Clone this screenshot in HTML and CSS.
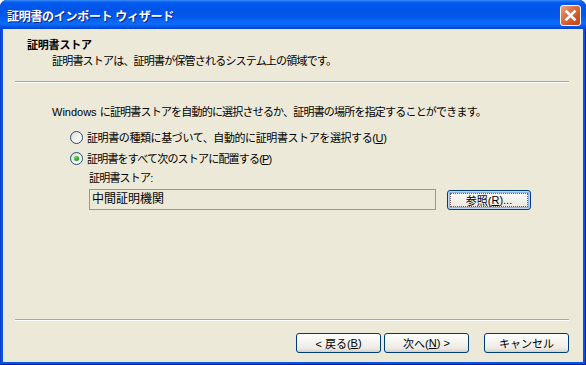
FILE: index.html
```html
<!DOCTYPE html>
<html lang="ja">
<head>
<meta charset="utf-8">
<link rel="stylesheet" href="styles.css">
</head>
<body>
<div class="window">
  <div class="titlebar">
    <span class="title">証明書のインポート ウィザード</span>
    <span class="close"><svg width="19" height="19" viewBox="0 0 19 19"><path d="M5.5 5.5 L13.5 13.5 M13.5 5.5 L5.5 13.5" stroke="#fff" stroke-width="2.6" stroke-linecap="square" fill="none"/></svg></span>
  </div>
  <div class="client">
    <div class="header">
      <div class="h-title">証明書ストア</div>
      <div class="h-sub">証明書ストアは、証明書が保管されるシステム上の領域です。</div>
    </div>
    <div class="sep"></div>
    <div class="content">
      <div class="intro"><span class="lat">Windows </span>に証明書ストアを自動的に選択させるか、証明書の場所を指定することができます。</div>
      <div class="radio first"><span class="rb"></span><span>証明書の種類に基づいて、自動的に証明書ストアを選択する(<u>U</u>)</span></div>
      <div class="radio second"><span class="rb checked"></span><span>証明書をすべて次のストアに配置する(<u>P</u>)</span></div>
      <div class="store">
        <div class="label">証明書ストア:</div>
        <div class="row">
          <div class="input">中間証明機関</div>
          <span class="btn focus">参照(<u>R</u>)...</span>
        </div>
      </div>
    </div>
    <div class="sep bottom"></div>
    <div class="footer">
      <span class="btn">&lt; 戻る(<u>B</u>)</span>
      <span class="btn">次へ(<u>N</u>) &gt;</span>
      <span class="btn cancel">キャンセル</span>
    </div>
  </div>
</div>
</body>
</html>
```

FILE: styles.css
```css
html, body {
  margin: 0;
  padding: 0;
  background: #ffffff;
}
body {
  width: 586px;
  height: 365px;
  overflow: hidden;
  font-family: "Liberation Sans", "Noto Sans CJK JP", sans-serif;
  font-size: 11px;
  color: #000;
}
.window {
  width: 586px;
  height: 365px;
  box-sizing: border-box;
  background: #0855dd;
  border-radius: 7px 7px 0 0;
  display: flex;
  flex-direction: column;
  box-shadow: inset 1px 0 #0a3fd0, inset -1px 0 #001ea0, inset 0 -1px #001ea0;
  overflow: hidden;
}
.titlebar {
  height: 29px;
  flex: none;
  display: flex;
  align-items: center;
  justify-content: space-between;
  padding: 0 5px 0 7px;
  background: linear-gradient(to bottom, #3d8ff7 0, #0a5fef 2px, #0058ee 4px, #0054e6 10px, #0058ea 16px, #0a66f6 21px, #0d6cf8 24px, #0054e4 27px, #003dd0 29px);
  border-radius: 7px 7px 0 0;
}
.title {
  color: #fff;
  font-weight: bold;
  font-size: 12px;
  letter-spacing: -0.3px;
  text-shadow: 1px 1px #0a1e80;
  padding-top: 1px;
}
.close {
  width: 21px;
  height: 21px;
  box-sizing: border-box;
  border: 1px solid #fff;
  border-radius: 3px;
  background: linear-gradient(135deg, #eea082 0%, #e0734d 35%, #d05227 70%, #c1441b 100%);
  display: flex;
  margin-top: 2px;
}
.client {
  flex: 1;
  margin: 0 3px 3px 3px;
  background: #ece9d8;
  display: flex;
  flex-direction: column;
  letter-spacing: -0.8px;
}
.lat { letter-spacing: 0; }
.header {
  padding-top: 9px;
}
.h-title {
  margin-left: 24px;
  font-weight: bold;
  line-height: 14px;
  letter-spacing: -0.2px;
}
.h-sub {
  margin: 2px 0 0 49px;
  line-height: 14px;
}
.sep {
  margin: 13px 14px 0 12px;
  border-top: 1px solid #aca899;
  border-bottom: 1px solid #ffffff;
  height: 0;
}
.content {
  padding-top: 22px;
}
.intro {
  margin-left: 49px;
  line-height: 14px;
}
.radio {
  margin: 11px 0 0 67px;
  height: 14px;
  display: flex;
  align-items: center;
  gap: 4px;
}
.radio.first {
  letter-spacing: -0.4px;
}
.radio.second {
  margin-top: 7px;
}
.rb {
  width: 13px;
  height: 13px;
  box-sizing: border-box;
  border-radius: 50%;
  border: 1px solid #1c5180;
  background: linear-gradient(135deg, #dcdad1 0%, #f4f3ee 55%, #ffffff 100%);
  display: flex;
  align-items: center;
  justify-content: center;
}
.rb.checked::after {
  content: "";
  width: 5px;
  height: 5px;
  border-radius: 50%;
  background: radial-gradient(circle at 35% 35%, #5ee05e, #21a121 60%, #1a8f1a);
}
.store {
  margin: 6px 0 0 86px;
}
.label {
  line-height: 14px;
}
.row {
  margin-top: 4px;
  display: flex;
  align-items: center;
  gap: 11px;
}
.input {
  width: 347px;
  height: 21px;
  box-sizing: border-box;
  border: 1px solid #7f9db9;
  background: #ece9d8;
  font-size: 12px;
  letter-spacing: 0;
  line-height: 19px;
  padding-left: 2px;
}
.btn {
  width: 85px;
  height: 20px;
  box-sizing: border-box;
  border: 1px solid #003c74;
  border-radius: 3px;
  background: linear-gradient(to bottom, #ffffff 0%, #f6f5f0 40%, #ecebe5 80%, #d6d0c5 100%);
  display: flex;
  align-items: center;
  justify-content: center;
  position: relative;
  letter-spacing: 0;
}
.btn.focus {
  width: 84px;
  box-shadow: inset 0 0 0 1px #c0d8f8, inset 0 0 0 2px #90b4ea;
}
.btn.focus::after {
  content: "";
  position: absolute;
  inset: 2px;
  border: 1px dotted #6b5a4a;
  border-radius: 1px;
}
.sep.bottom {
  margin-top: auto;
}
.footer {
  padding: 12px 14px 9px 0;
  display: flex;
  justify-content: flex-end;
  gap: 3px;
}
.footer .cancel {
  margin-left: 12px;
}
u {
  text-decoration: underline;
  text-underline-offset: 1px;
}
```
